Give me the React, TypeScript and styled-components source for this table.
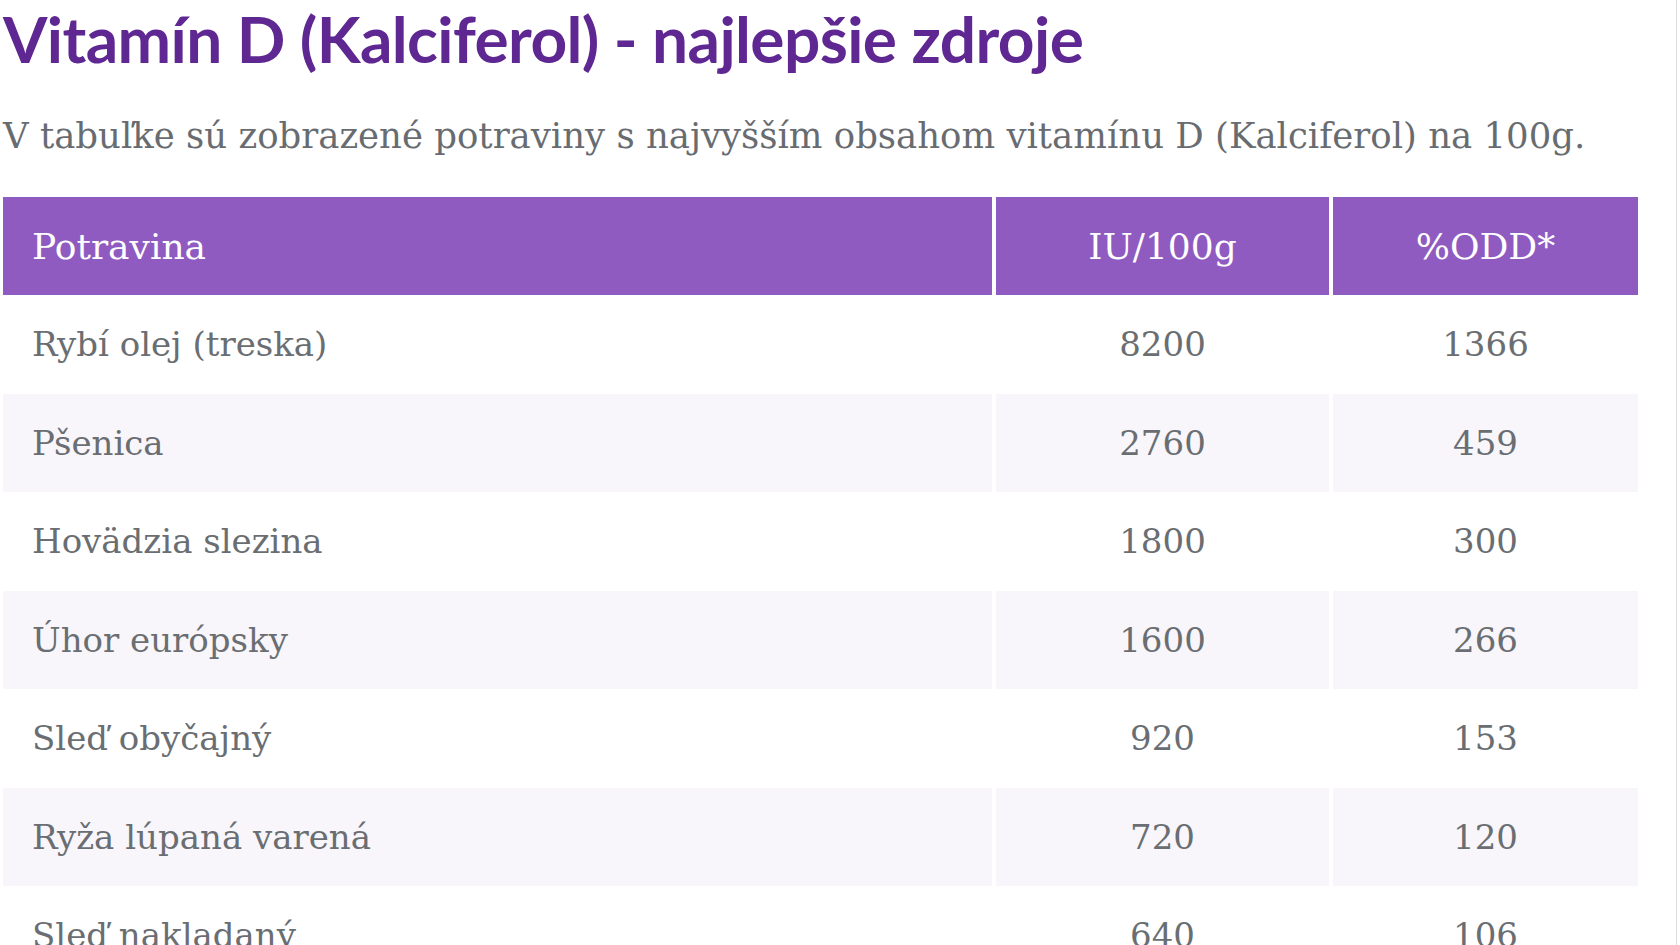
import React from 'react';
import styled, { createGlobalStyle } from 'styled-components';

const GlobalStyle = createGlobalStyle`
  html, body {
    margin: 0;
    padding: 0;
    background: #ffffff;
  }
  body {
    font-family: "DejaVu Serif", serif;
  }
`;

type Row = {
  name: string;
  iu: number;
  odd: number;
};

const ROWS: Row[] = [
  { name: 'Rybí olej (treska)', iu: 8200, odd: 1366 },
  { name: 'Pšenica', iu: 2760, odd: 459 },
  { name: 'Hovädzia slezina', iu: 1800, odd: 300 },
  { name: 'Úhor európsky', iu: 1600, odd: 266 },
  { name: 'Sleď obyčajný', iu: 920, odd: 153 },
  { name: 'Ryža lúpaná varená', iu: 720, odd: 120 },
  { name: 'Sleď nakladaný', iu: 640, odd: 106 },
];

export default function App() {
  return (
    <>
      <GlobalStyle />
      <Page>
        <Content>
          <Title>Vitamín D (Kalciferol) - najlepšie zdroje</Title>
          <Lead>
            V tabuľke sú zobrazené potraviny s najvyšším obsahom vitamínu D (Kalciferol) na 100g.
          </Lead>
          <Table>
            <colgroup>
              <col style={{ width: 991 }} />
              <col style={{ width: 337 }} />
              <col style={{ width: 307 }} />
            </colgroup>
            <thead>
              <tr>
                <HeadCell>Potravina</HeadCell>
                <HeadCell $center>IU/100g</HeadCell>
                <HeadCell $center>%ODD*</HeadCell>
              </tr>
            </thead>
            <tbody>
              {ROWS.map((r, i) => (
                <BodyRow key={r.name} $striped={i % 2 === 1}>
                  <Cell>{r.name}</Cell>
                  <Cell $center>{r.iu}</Cell>
                  <Cell $center>{r.odd}</Cell>
                </BodyRow>
              ))}
            </tbody>
          </Table>
        </Content>
        <Edge />
      </Page>
    </>
  );
}

const Page = styled.div`
  display: flex;
  height: 945px;
  overflow: hidden;
`;

const Content = styled.main`
  width: 1676px;
  padding-left: 3px;
  box-sizing: border-box;
`;

const Edge = styled.div`
  width: 1px;
  background: #dcdcdc;
`;

const Title = styled.h1`
  margin: 0;
  padding-top: 1px;
  font-family: Lato, "Open Sans", sans-serif;
  font-weight: 700;
  font-size: 64px;
  line-height: 76px;
  letter-spacing: -0.6px;
  color: #5e2791;
`;

const Lead = styled.p`
  margin: 35px 0 0;
  font-family: "DejaVu Serif", serif;
  font-weight: 400;
  font-size: 35.5px;
  line-height: 48px;
  color: #686c70;
`;

const Table = styled.table`
  margin-top: 37px;
  width: 1635px;
  border-collapse: collapse;
  table-layout: fixed;
  font-family: "DejaVu Serif", serif;
`;

const HeadCell = styled.th<{ $center?: boolean }>`
  height: 98px;
  padding: 0 0 0 ${p => (p.$center ? 0 : 29)}px;
  background: #8f5bc1;
  color: #ffffff;
  font-weight: 400;
  font-size: 36px;
  text-align: ${p => (p.$center ? 'center' : 'left')};
  & + & {
    border-left: 4px solid #ffffff;
  }
`;

const BodyRow = styled.tr<{ $striped: boolean }>`
  background: ${p => (p.$striped ? '#f8f6fa' : '#ffffff')};
`;

const Cell = styled.td<{ $center?: boolean }>`
  height: 98.5px;
  padding: 0 0 0 ${p => (p.$center ? 0 : 29)}px;
  color: #6a6e72;
  font-weight: 400;
  font-size: 34px;
  text-align: ${p => (p.$center ? 'center' : 'left')};
  & + & {
    border-left: 4px solid #ffffff;
  }
`;
